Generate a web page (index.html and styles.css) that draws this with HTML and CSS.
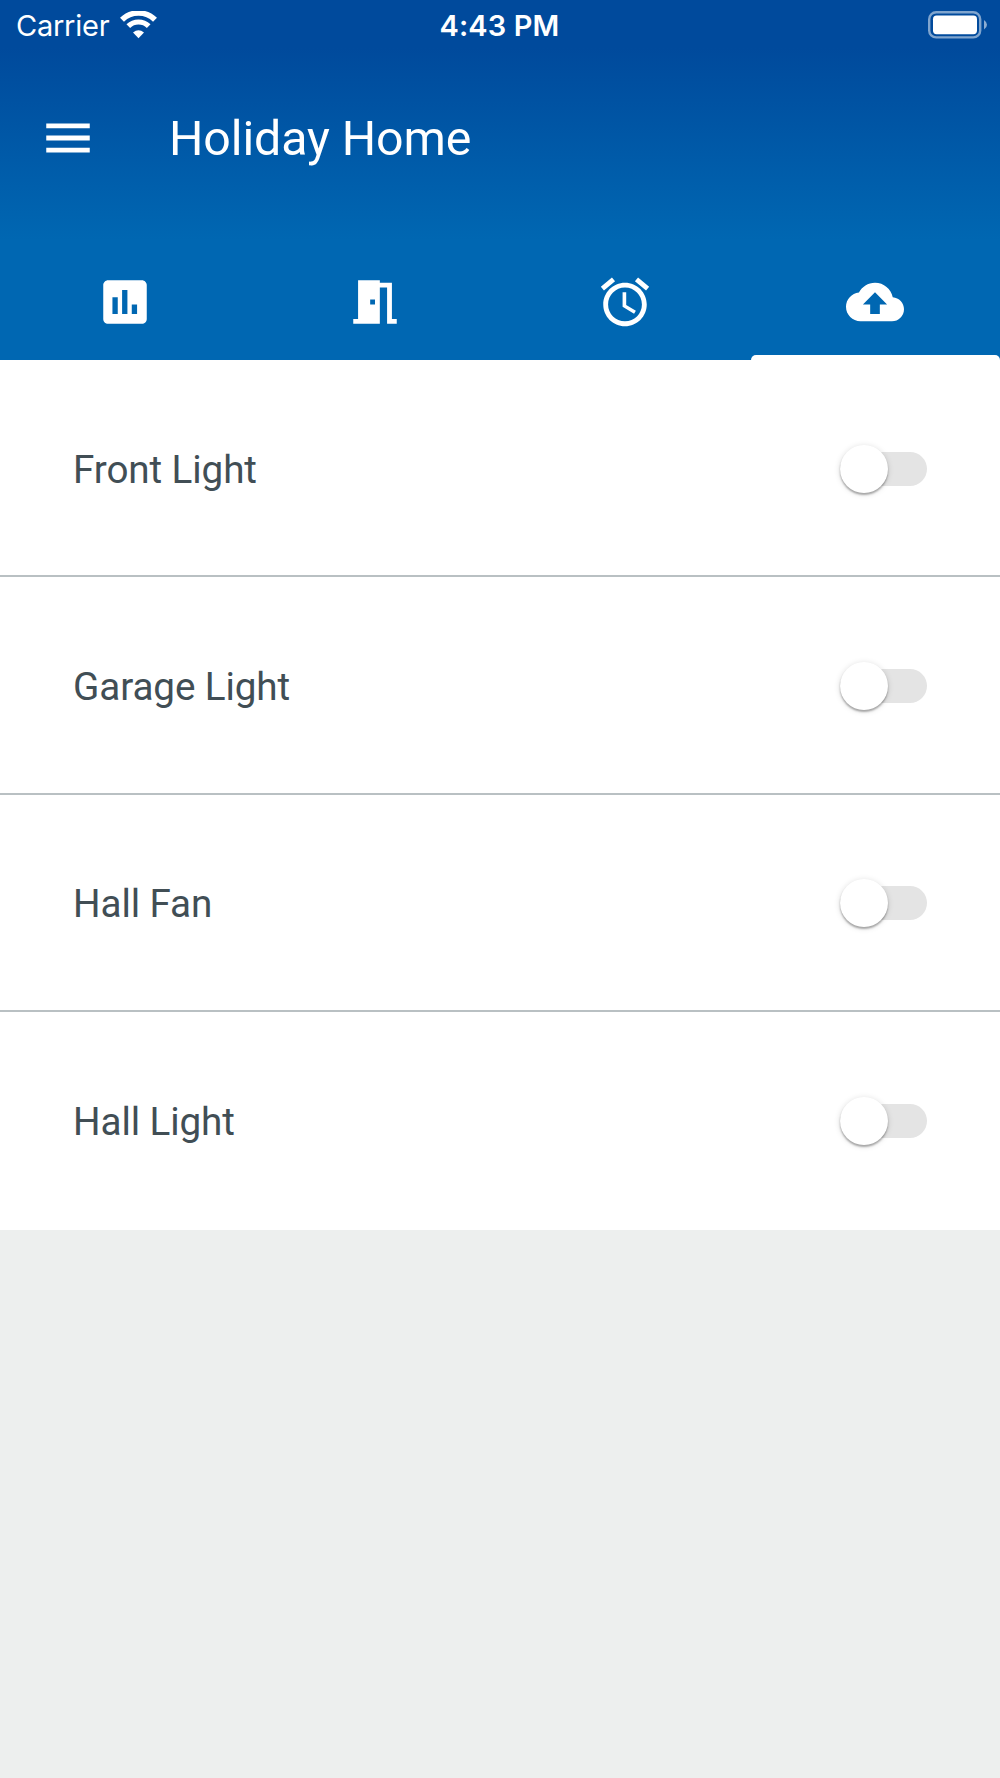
FILE: index.html
```html
<!DOCTYPE html>
<html lang="en">
<head>
<meta charset="utf-8">
<title>Holiday Home</title>
<link rel="stylesheet" href="styles.css">
</head>
<body>
<header class="header">
  <div class="status">
    <div class="status-left">
      <span class="carrier">Carrier</span>
      <svg class="wifi" viewBox="0 0 37 28" fill="none" stroke="#fff">
        <path d="M2 8.800A23.500 23.500 0 0 1 35 8.800" stroke-width="5.600"/>
        <path d="M8.300 15.200A14.500 14.500 0 0 1 28.700 15.200" stroke-width="5.200"/>
        <path d="M18.500 27.300L13 21.600Q18.500 17 24 21.600Z" fill="#fff" stroke="none"/>
      </svg>
    </div>
    <span class="time">4:43 PM</span>
    <div class="status-right">
      <svg class="battery" viewBox="0 0 60 28">
        <rect x="1.200" y="1.200" width="51" height="25.200" rx="7" fill="none" stroke="#fff" stroke-opacity=".5" stroke-width="2.400"/>
        <rect x="5" y="4.600" width="44" height="18.600" rx="3.600" fill="#fff"/>
        <path d="M56 9Q59 11 59 13.800Q59 16.600 56 18.600Z" fill="#fff" fill-opacity=".55"/>
      </svg>
    </div>
  </div>
  <div class="toolbar">
    <svg class="icon" viewBox="0 0 24 24"><path d="M3 18h18v-2H3v2zm0-5h18v-2H3v2zm0-7v2h18V6H3z"/></svg>
    <h1 class="title">Holiday Home</h1>
  </div>
  <nav class="tabs">
    <div class="tab"><svg class="icon" viewBox="0 0 24 24"><path d="M19 3H5c-1.100 0-2 .9-2 2v14c0 1.100.9 2 2 2h14c1.100 0 2-.9 2-2V5c0-1.100-.9-2-2-2zM9 17H6.800v-7H9v7zm4 0h-2.200V7H13v10zm4 0h-2.200v-4H17v4z"/></svg></div>
    <div class="tab tab-nudge"><svg class="icon" viewBox="0 0 24 24"><path d="M14 6v15H3v-2h2V3h9v1h5v15h2v2h-4V6h-3zm-4 5v2h2v-2h-2z"/></svg></div>
    <div class="tab"><svg class="icon" viewBox="0 0 24 24"><path d="M22 5.720l-4.600-3.860-1.290 1.530 4.600 3.860L22 5.720zM7.880 3.390L6.600 1.860 2 5.710l1.290 1.530 4.590-3.850zM12.500 8H11v6l4.750 2.850.75-1.230-4-2.370V8zM12 4c-4.970 0-9 4.030-9 9s4.020 9 9 9c4.970 0 9-4.030 9-9s-4.030-9-9-9zm0 16c-3.870 0-7-3.130-7-7s3.130-7 7-7 7 3.130 7 7-3.130 7-7 7z"/></svg></div>
    <div class="tab tab-nudge tab-active"><svg class="icon" viewBox="0 0 24 24"><path d="M19.350 10.040C18.670 6.590 15.640 4 12 4 9.110 4 6.600 5.640 5.350 8.040 2.340 8.360 0 10.910 0 14c0 3.310 2.690 6 6 6h13c2.760 0 5-2.240 5-5 0-2.640-2.050-4.780-4.650-4.960zM14 13v4h-4v-4H7l5-5 5 5h-3z"/></svg></div>
  </nav>
</header>
<main class="list">
  <div class="row"><span class="label">Front Light</span><span class="switch"><span class="thumb"></span></span></div>
  <div class="row"><span class="label">Garage Light</span><span class="switch"><span class="thumb"></span></span></div>
  <div class="row"><span class="label">Hall Fan</span><span class="switch"><span class="thumb"></span></span></div>
  <div class="row"><span class="label">Hall Light</span><span class="switch"><span class="thumb"></span></span></div>
</main>
</body>
</html>
```
FILE: styles.css
```css
* { box-sizing: border-box; }
body {
  margin: 0;
  min-height: 1778px;
  background: #edefee;
  font-family: Roboto, "Liberation Sans", sans-serif;
}
.header {
  height: 360px;
  display: flex;
  flex-direction: column;
  color: #fff;
  background: linear-gradient(#004a9c 48px, #0067b2 240px);
}
.status {
  height: 48px;
  padding: 0 13px 0 16px;
  display: grid;
  grid-template-columns: 1fr auto 1fr;
  align-items: center;
  font-family: Inter, "Liberation Sans", sans-serif;
  font-size: 29px;
  line-height: 48px;
}
.status-left { display: flex; align-items: center; gap: 11px; }
.status-right { display: flex; justify-content: flex-end; }
.carrier { padding-top: 2px; letter-spacing: -.25px; }
.time { padding-top: 2px; margin: 0 2px 0 -2px; font-weight: 600; letter-spacing: .1px; }
.wifi { width: 37px; height: 28px; }
.battery { width: 60px; height: 28px; margin-right: -1px; }
.toolbar {
  height: 180px;
  padding-left: 39px;
  display: flex;
  align-items: center;
  gap: 72px;
}
.icon { width: 58px; height: 58px; fill: #fff; display: block; }
.title { margin: 0; padding-top: 1px; font-size: 48.300px; font-weight: 400; line-height: 58px; letter-spacing: -.1px; }
.tabs { flex: 1; display: grid; grid-template-columns: repeat(4, 1fr); }
.tab { display: flex; justify-content: center; padding-top: 45px; }
.tab-nudge { padding-right: 1px; }
.tab-active { position: relative; }
.tab-active::after {
  content: "";
  position: absolute;
  left: 1px;
  right: 0;
  bottom: 0;
  height: 5px;
  background: #fff;
  border-radius: 5px 5px 0 0;
}
.list { background: #fff; }
.row {
  height: 217.400px;
  padding: 2px 73px 0;
  display: flex;
  align-items: center;
  justify-content: space-between;
  border-bottom: 2.400px solid #b9c0c3;
}
.row:last-child { border-bottom-color: transparent; }
.label { padding-top: 2px; font-size: 38.650px; line-height: 48px; color: #414e55; letter-spacing: -.1px; }
.switch {
  width: 87px;
  height: 34px;
  display: flex;
  align-items: center;
  border-radius: 17px;
  background: #e4e4e4;
}
.thumb {
  width: 48px;
  height: 48px;
  flex: none;
  border-radius: 50%;
  background: #fff;
  box-shadow: 0 2px 2px rgba(0,0,0,.3), 0 1px 6px rgba(0,0,0,.14);
}
```
